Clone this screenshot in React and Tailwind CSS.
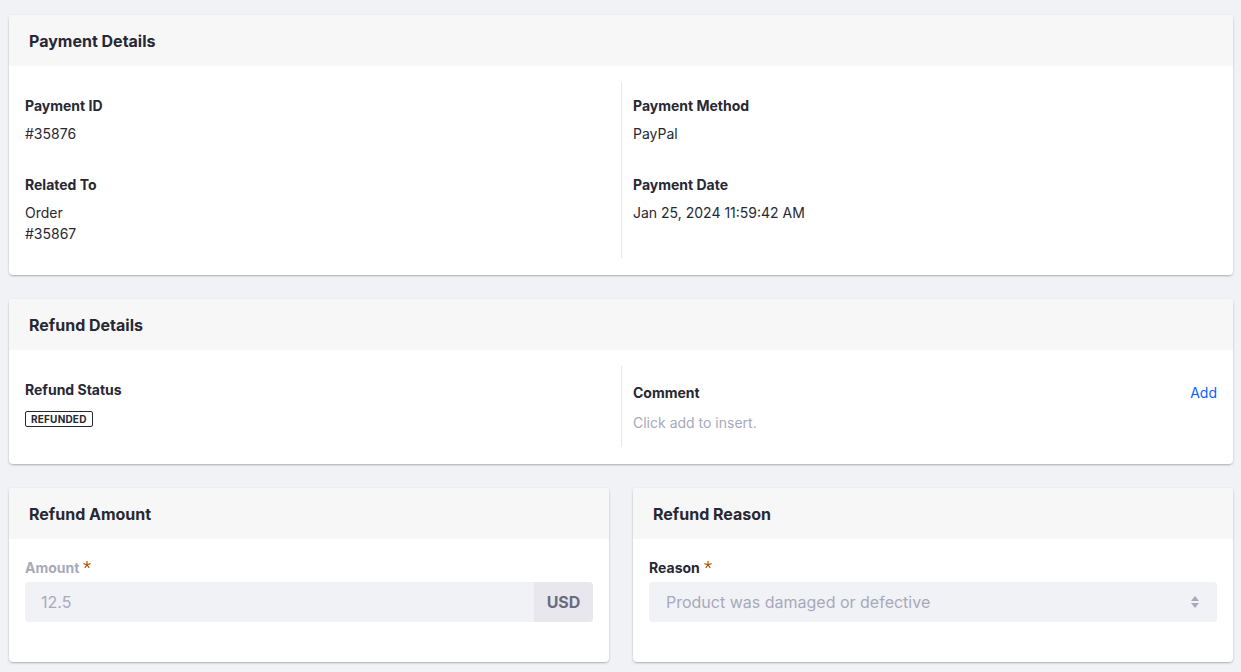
import React from 'react';

const font = { fontFamily: 'Inter, "Noto Sans", sans-serif' };

function Card({ title, children, className = '' }) {
  return (
    <div className={`bg-white rounded-[4px] shadow-[0_1px_3px_-1px_rgba(0,0,0,0.6)] overflow-hidden ${className}`}>
      <div className="h-[51px] bg-[#f7f7f8] px-5 flex items-center">
        <h2 className="text-[16px] font-bold text-[#272833] leading-6">{title}</h2>
      </div>
      {children}
    </div>
  );
}

function Field({ label, children, last }) {
  return (
    <div className={last ? '' : 'mb-[31px]'}>
      <div className="text-[14px] font-bold leading-5 text-[#272833]">{label}</div>
      <div className="mt-[7px] text-[14px] leading-[21px] text-[#272833]">{children}</div>
    </div>
  );
}

function Asterisk() {
  return (
    <svg className="inline-block ml-1 -mt-2 align-middle" width="8" height="8" viewBox="0 0 16 16" fill="#b95000">
      <path d="M9.2 0H6.8v5.9L1.2 4.1.5 6.4l5.6 1.8-3.5 4.8 1.9 1.4L8 9.6l3.5 4.8 1.9-1.4-3.5-4.8 5.6-1.8-.7-2.3-5.6 1.8z" />
    </svg>
  );
}

export default function App() {
  return (
    <div className="min-h-screen bg-[#f1f2f5] pl-[9px] pr-[8px] pt-[15px] pb-6" style={font}>
      <Card title="Payment Details" className="mb-6">
        <div className="px-4 pt-4 pb-[17px] grid grid-cols-2">
          <div className="py-[14px]">
            <Field label="Payment ID">#35876</Field>
            <Field label="Related To" last>
              <div>Order</div>
              <div>#35867</div>
            </Field>
          </div>
          <div className="py-[14px] border-l border-[#e7e7ed] pl-[11px]">
            <Field label="Payment Method">PayPal</Field>
            <Field label="Payment Date" last>Jan 25, 2024 11:59:42 AM</Field>
          </div>
        </div>
      </Card>

      <Card title="Refund Details" className="mb-6">
        <div className="px-4 pt-4 pb-[17px] grid grid-cols-2">
          <div className="py-[14px]">
            <div className="text-[14px] font-bold leading-5 text-[#272833]">Refund Status</div>
            <div className="mt-[11px] flex">
              <span className="inline-flex items-center h-4 px-[5px] border border-[#272833] rounded-[2px] text-[10px] font-bold tracking-[0.2px] text-[#272833] leading-none">
                REFUNDED
              </span>
            </div>
          </div>
          <div className="py-[14px] border-l border-[#e7e7ed] pl-[11px]">
            <div className="h-[26px] flex items-center justify-between">
              <span className="text-[14px] font-bold leading-5 text-[#272833]">Comment</span>
              <a href="#" className="text-[14px] leading-5 text-[#0b5fff]">Add</a>
            </div>
            <div className="mt-[7px] text-[14px] leading-5 text-[#a7a9bc]">Click add to insert.</div>
          </div>
        </div>
      </Card>

      <div className="grid grid-cols-2 gap-6">
        <Card title="Refund Amount">
          <div className="px-4 pt-[19px] pb-10">
            <div className="text-[14px] font-bold leading-5 text-[#a7a9bc]">
              Amount<Asterisk />
            </div>
            <div className="mt-1 flex h-10 rounded-[4px] overflow-hidden bg-[#f1f2f5]">
              <div className="flex-1 flex items-center pl-4 text-[16px] text-[#a7a9bc]">12.5</div>
              <div className="w-[59px] flex items-center justify-center bg-[#e7e7ed] text-[16px] font-bold text-[#6b6c7e]">
                USD
              </div>
            </div>
          </div>
        </Card>

        <Card title="Refund Reason">
          <div className="px-4 pt-[19px] pb-10">
            <div className="text-[14px] font-bold leading-5 text-[#272833]">
              Reason<Asterisk />
            </div>
            <div className="mt-1 flex items-center justify-between h-10 rounded-[4px] bg-[#f1f2f5] pl-[17px] pr-[17px]">
              <span className="text-[16px] text-[#a7a9bc]">Product was damaged or defective</span>
              <svg width="10" height="14" viewBox="0 0 10 14" fill="#a7a9bc">
                <path d="M5 1 9 6H1z" />
                <path d="M5 13 9 8H1z" />
              </svg>
            </div>
          </div>
        </Card>
      </div>
    </div>
  );
}
